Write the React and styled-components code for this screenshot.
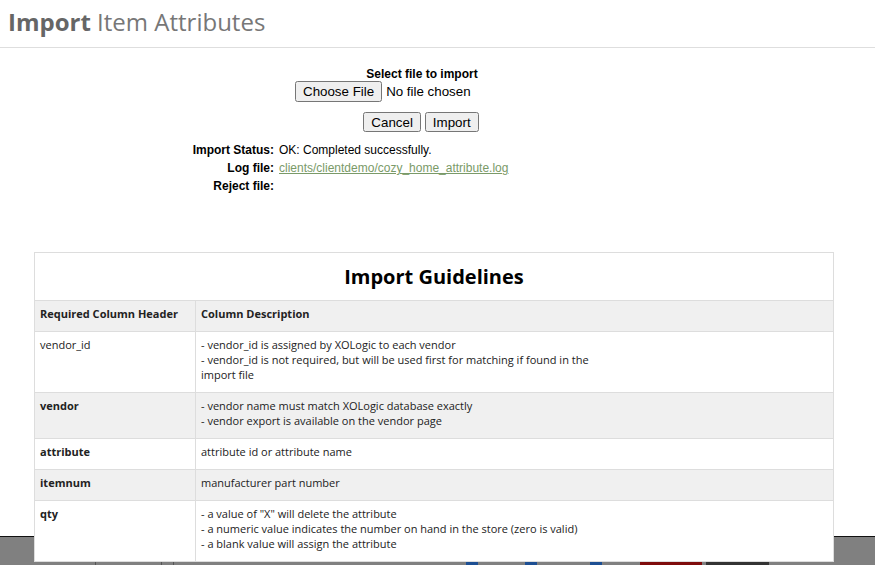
import React from "react";
import styled, { createGlobalStyle } from "styled-components";

const GlobalStyle = createGlobalStyle`
  html, body {
    margin: 0;
    padding: 0;
    background: #fff;
  }
  body {
    font-family: "Liberation Sans", Arial, sans-serif;
    font-size: 12px;
    color: #000;
  }
`;

const guidelines = [
  {
    name: "vendor_id",
    bold: false,
    lines: [
      "- vendor_id is assigned by XOLogic to each vendor",
      "- vendor_id is not required, but will be used first for matching if found in the import file",
    ],
  },
  {
    name: "vendor",
    bold: true,
    lines: [
      "- vendor name must match XOLogic database exactly",
      "- vendor export is available on the vendor page",
    ],
  },
  { name: "attribute", bold: true, lines: ["attribute id or attribute name"] },
  { name: "itemnum", bold: true, lines: ["manufacturer part number"] },
  {
    name: "qty",
    bold: true,
    lines: [
      '- a value of "X" will delete the attribute',
      "- a numeric value indicates the number on hand in the store (zero is valid)",
      "- a blank value will assign the attribute",
    ],
  },
];

const App = () => {
  return (
    <>
      <GlobalStyle />
      <Header>
        <Title>
          <strong>Import</strong> Item Attributes
        </Title>
      </Header>

      <Form>
        <Label>Select file to import</Label>
        <FileInput type="file" />
        <Buttons>
          <button type="button">Cancel</button>
          <button type="button">Import</button>
        </Buttons>
      </Form>

      <Status>
        <StatusLabel>Import Status:</StatusLabel>
        <span>OK: Completed successfully.</span>
        <StatusLabel>Log file:</StatusLabel>
        <LogLink href="#">clients/clientdemo/cozy_home_attribute.log</LogLink>
        <StatusLabel>Reject file:</StatusLabel>
        <span></span>
      </Status>

      <Panel>
        <Table>
          <thead>
            <tr>
              <Caption colSpan={2}>Import Guidelines</Caption>
            </tr>
            <Row $shade>
              <HeadCell>Required Column Header</HeadCell>
              <HeadCell>Column Description</HeadCell>
            </Row>
          </thead>
          <tbody>
            {guidelines.map((g, i) => (
              <Row key={g.name} $shade={i % 2 === 1}>
                <NameCell $bold={g.bold}>{g.name}</NameCell>
                <Cell>
                  <Desc>
                    {g.lines.map((l) => (
                      <div key={l}>{l}</div>
                    ))}
                  </Desc>
                </Cell>
              </Row>
            ))}
          </tbody>
        </Table>
      </Panel>

      <Footer>
        <Fragment $ml={95} $w={1} $color="#555" />
        <Fragment $ml={65} $w={1} $color="#555" />
        <Fragment $ml={11} $w={1} $color="#555" />
        <Fragment $ml={292} $w={12} $color="#1d4f93" />
        <Fragment $ml={47} $w={12} $color="#1d4f93" />
        <Fragment $ml={53} $w={12} $color="#1d4f93" />
        <Fragment $ml={38} $w={62} $color="#7e0b0b" />
        <Fragment $ml={4} $w={63} $color="#333" />
      </Footer>
    </>
  );
};

export default App;

const Header = styled.div`
  height: 43px;
  padding: 0 0 4px 8px;
  border-bottom: 1px solid #dedede;
  display: flex;
  align-items: center;
`;

const Title = styled.h1`
  margin: 0;
  font-family: "Open Sans", sans-serif;
  font-size: 24px;
  font-weight: 400;
  color: #777;
  strong {
    font-weight: 700;
    color: #666;
  }
`;

const Form = styled.div`
  width: 842px;
  display: flex;
  flex-direction: column;
  align-items: center;
  padding-top: 19px;
`;

const Label = styled.div`
  font-weight: bold;
  font-size: 12px;
  line-height: 14px;
  margin-left: 2px;
`;

const FileInput = styled.input`
  font-family: "Liberation Sans", Arial, sans-serif;
  font-size: 13.33px;
  width: 252px;
  margin: 0;
`;

const Buttons = styled.div`
  display: flex;
  gap: 4px;
  margin-top: 10px;
  button {
    font-family: "Liberation Sans", Arial, sans-serif;
    font-size: 13.33px;
    height: 20px;
    padding: 1px 6px;
  }
`;

const Status = styled.div`
  display: grid;
  grid-template-columns: 274px 1fr;
  column-gap: 5px;
  row-gap: 4px;
  margin-top: 11px;
  line-height: 14px;
`;

const StatusLabel = styled.span`
  font-weight: bold;
  text-align: right;
`;

const LogLink = styled.a`
  color: #7a9a68;
  text-decoration: underline;
`;

const Panel = styled.div`
  position: relative;
  z-index: 1;
  margin: 59px 0 0 34px;
  width: 800px;
  background: #fff;
`;

const Table = styled.table`
  width: 100%;
  border-collapse: collapse;
  border: 1px solid #ddd;
  font-family: "Open Sans", sans-serif;
  font-size: 11px;
  color: #222;
`;

const Caption = styled.th`
  height: 47px;
  font-size: 20px;
  font-weight: 700;
  color: #000;
  text-align: center;
  padding: 0;
`;

const Row = styled.tr`
  background: ${(p) => (p.$shade ? "#f0f0f0" : "#fff")};
  border-top: 1px solid #ddd;
`;

const HeadCell = styled.th`
  text-align: left;
  font-weight: 700;
  padding: 5px 5px 10px;
  line-height: 15px;
  border-left: 1px solid #ddd;
  &:first-child {
    width: 150px;
    border-left: none;
  }
`;

const Cell = styled.td`
  vertical-align: top;
  padding: 5px 5px 10px;
  line-height: 15px;
  border-left: 1px solid #ddd;
`;

const NameCell = styled(Cell)`
  font-weight: ${(p) => (p.$bold ? 700 : 400)};
  border-left: none;
`;

const Desc = styled.div`
  max-width: 400px;
`;

const Footer = styled.div`
  position: fixed;
  left: 0;
  right: 0;
  bottom: 0;
  height: 28px;
  background: #808080;
  border-top: 1px solid #111;
  display: flex;
  align-items: flex-end;
`;

const Fragment = styled.div`
  flex: none;
  height: 4px;
  width: ${(p) => p.$w}px;
  margin-left: ${(p) => p.$ml}px;
  background: ${(p) => p.$color};
`;
